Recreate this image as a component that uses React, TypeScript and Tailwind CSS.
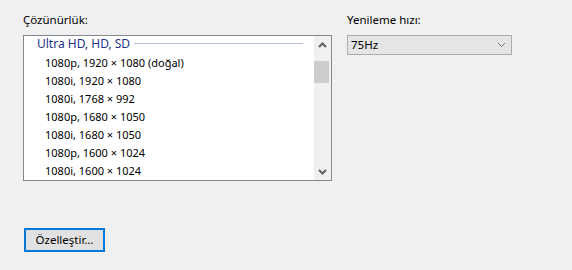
import React from 'react';

const modes = [
  '1080p, 1920 × 1080 (doğal)',
  '1080i, 1920 × 1080',
  '1080i, 1768 × 992',
  '1080p, 1680 × 1050',
  '1080i, 1680 × 1050',
  '1080p, 1600 × 1024',
  '1080i, 1600 × 1024',
];

const Chevron: React.FC<{ up?: boolean; thin?: boolean }> = ({ up, thin }) => (
  <svg width="9" height="6" viewBox="0 0 9 6" className="block">
    <path
      d={up ? 'M1 5 L4.5 1.5 L8 5' : 'M1 1 L4.5 4.5 L8 1'}
      fill="none"
      stroke={thin ? '#707070' : '#606060'}
      strokeWidth={thin ? 1 : 2}
    />
  </svg>
);

const App: React.FC = () => {
  return (
    <div
      className="w-[572px] h-[270px] bg-[#f0f0f0] text-[11.5px] text-black overflow-hidden"
      style={{ fontFamily: '"Noto Sans", "Open Sans", sans-serif' }}
    >
      <div className="flex pl-[23px] pt-[12px] gap-[15px]">
        {/* resolution list */}
        <div className="w-[309px] flex flex-col">
          <div className="h-[16px] leading-[16px] mb-[7px]">Çözünürlük:</div>
          <div className="h-[146px] border border-[#828790] bg-white flex">
            <div className="flex-1 flex flex-col">
              <div className="h-[15px] flex items-center pl-[13px] pr-[11px] gap-[4px]">
                <span className="text-[#1e3287] text-[12px] leading-[15px] whitespace-nowrap">Ultra HD, HD, SD</span>
                <div className="flex-1 h-px bg-[#b6c3e0]" />
              </div>
              <div className="pt-[3px] text-[11px]">
                {modes.map(m => (
                  <div key={m} className="h-[18px] flex items-center pl-[21px] whitespace-nowrap">{m}</div>
                ))}
              </div>
            </div>
            <div className="w-[17px] bg-[#f0f0f0] flex flex-col">
              <div className="h-[18px] flex items-center justify-center"><Chevron up /></div>
              <div className="mt-[7px] h-[22px] w-[15px] bg-[#cdcdcd]" />
              <div className="flex-1" />
              <div className="h-[17px] flex items-center justify-center"><Chevron /></div>
            </div>
          </div>
          <div className="mt-[47px]">
            <button className="ml-px w-[81px] h-[24px] border-2 border-[#0078d7] bg-[#e1e1e1] flex items-center justify-center leading-none whitespace-nowrap">
              Özelleştir…
            </button>
          </div>
        </div>

        {/* refresh rate */}
        <div className="w-[165px] flex flex-col">
          <div className="h-[16px] leading-[16px] mb-[7px]">Yenileme hızı:</div>
          <div className="h-[20px] border border-[#adadad] bg-[#e5e5e5] flex items-center pl-[3px] pr-[5px]">
            <span className="flex-1">75Hz</span>
            <Chevron thin />
          </div>
        </div>
      </div>
    </div>
  );
};

export default App;
